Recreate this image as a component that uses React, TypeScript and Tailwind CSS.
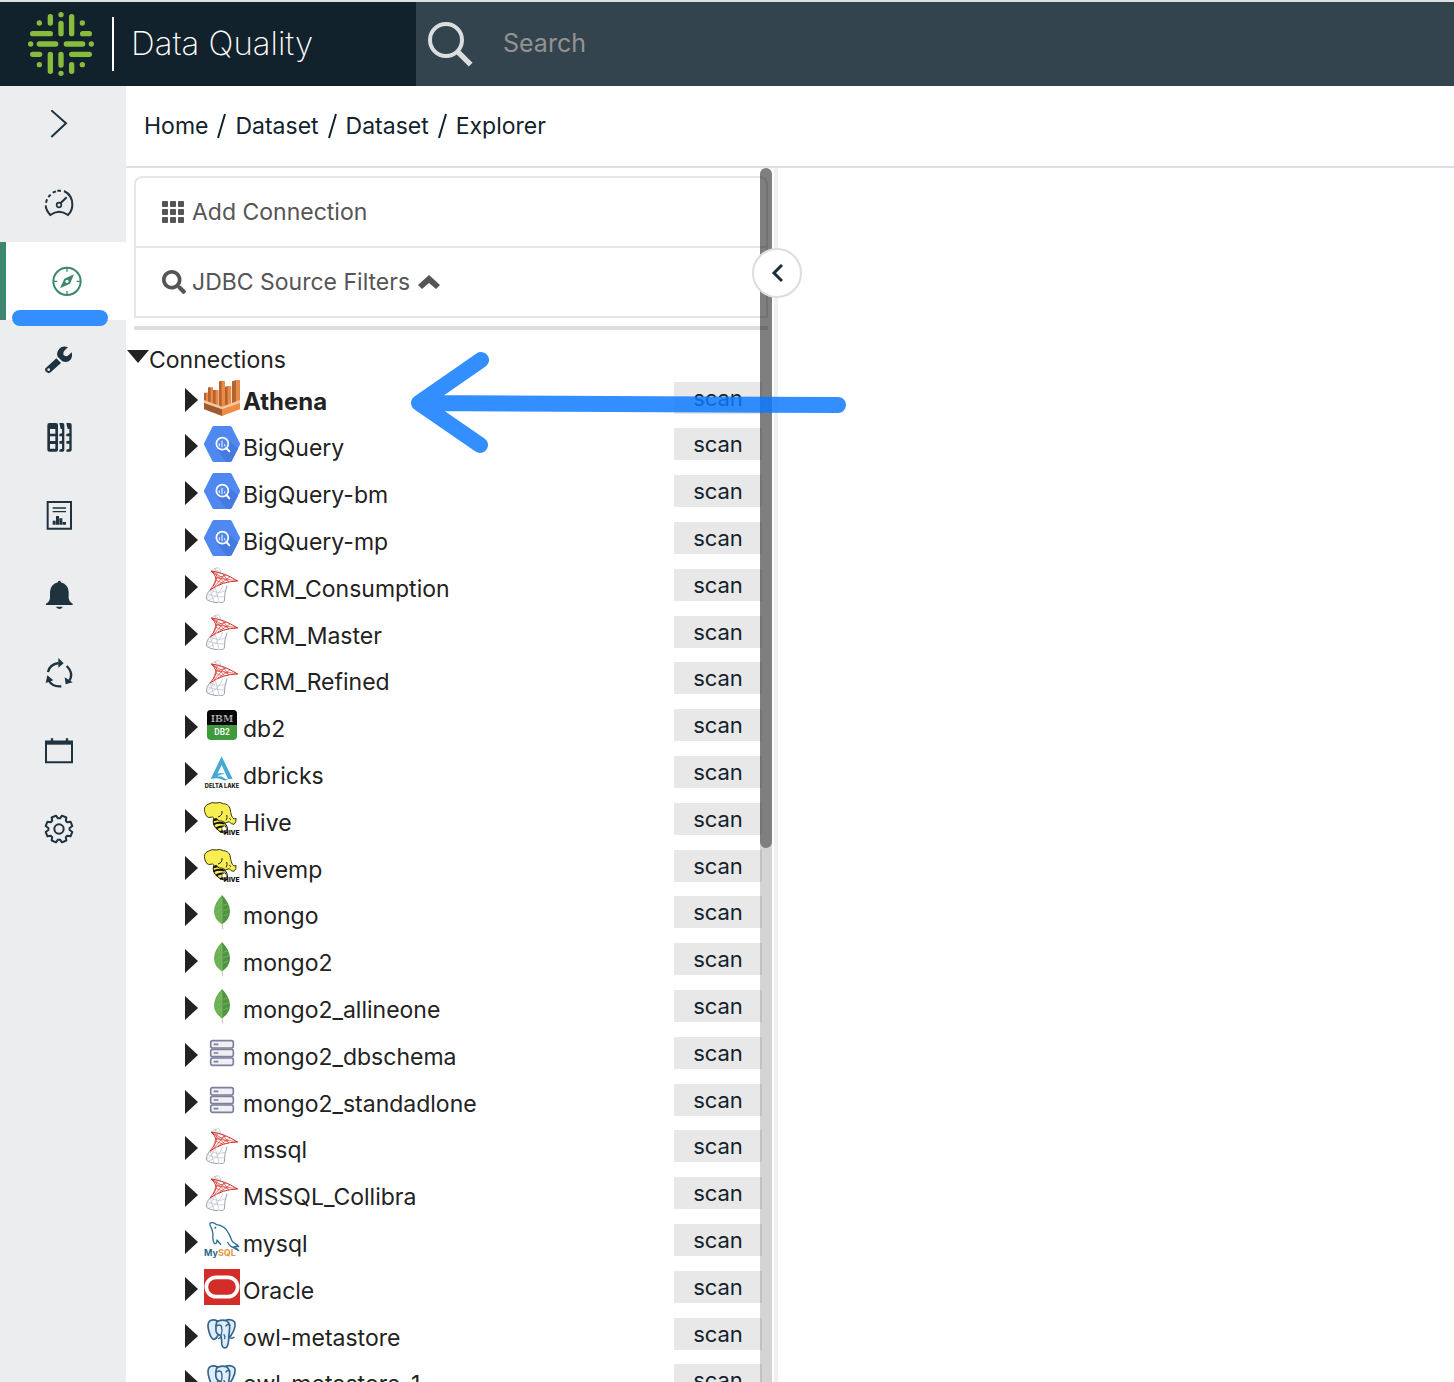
import type { ReactNode } from "react"
import { FaSearch } from "react-icons/fa"

type Source =
  | "athena"
  | "bigquery"
  | "mssql"
  | "db2"
  | "delta"
  | "hive"
  | "mongo"
  | "server"
  | "mysql"
  | "oracle"
  | "postgres"

const connections: { name: string; source: Source; bold?: boolean }[] = [
  { name: "Athena", source: "athena", bold: true },
  { name: "BigQuery", source: "bigquery" },
  { name: "BigQuery-bm", source: "bigquery" },
  { name: "BigQuery-mp", source: "bigquery" },
  { name: "CRM_Consumption", source: "mssql" },
  { name: "CRM_Master", source: "mssql" },
  { name: "CRM_Refined", source: "mssql" },
  { name: "db2", source: "db2" },
  { name: "dbricks", source: "delta" },
  { name: "Hive", source: "hive" },
  { name: "hivemp", source: "hive" },
  { name: "mongo", source: "mongo" },
  { name: "mongo2", source: "mongo" },
  { name: "mongo2_allineone", source: "mongo" },
  { name: "mongo2_dbschema", source: "server" },
  { name: "mongo2_standadlone", source: "server" },
  { name: "mssql", source: "mssql" },
  { name: "MSSQL_Collibra", source: "mssql" },
  { name: "mysql", source: "mysql" },
  { name: "Oracle", source: "oracle" },
  { name: "owl-metastore", source: "postgres" },
  { name: "owl-metastore-1", source: "postgres" },
]

const sourceArt: Record<Source, ReactNode> = {
  athena: (
    <>
      <path d="M0 38h12v40l-12-5zM12 22h9v60l-9-4zM26 30h10v56l-10-4zM45 4l9-2v84l-9-4zM63 20l9-2v64l-9 3zM84 4l14-4v76l-14 5z" fill="#b5642f" />
      <path d="M6 38h6v38l-6-3zM20 22h7v60l-7-2zM35 30h9v56h-9zM53 2l10 2v80l-10 2zM71 18h11v62l-11 4zM97 0h11v70l-11 6z" fill="#e98b47" />
      <path d="M0 60l54 20 54-20v10L54 92 0 70z" fill="#f5c6a2" />
      <path d="M0 69l54 19v20L0 88z" fill="#9f5a30" />
      <path d="M108 69L54 88v20l54-20z" fill="#ee8c45" />
    </>
  ),
  bigquery: (
    <>
      <path d="M30 0h48q3 0 5 3l24 47q2 4 0 8l-24 47q-2 3-5 3H30q-3 0-5-3L1 58q-2-4 0-8L25 3q2-3 5-3z" fill="#4f88f0" />
      <path d="M70 38l32 30-19 37q-2 3-5 3H68L40 72z" fill="#457be0" />
      <circle cx="55" cy="53" r="18" fill="#4f88f0" stroke="#fff" strokeWidth="5" />
      <path d="M67 66l9 10" stroke="#fff" strokeWidth="6" strokeLinecap="round" />
      <path d="M46 52v9M54 44v20M62 55v6" stroke="#d3e2ff" strokeWidth="4" />
    </>
  ),
  mssql: (
    <>
      <g fill="none" stroke="#b6bdc9" strokeWidth="2">
        <path d="M22 12Q32 2 44 2q6 6 7 19M22 12l28 8M30 5l18 10M36 2l-4 14" />
        <path d="M18 68Q6 80 7 96q6 8 38 12 16 0 16-6 0-26 8-46" stroke="#94a0b3" strokeWidth="3" />
        <path d="M8 78q20 12 54 12M18 68q22 14 46 4M7 96q22-18 24-34M12 100q34-12 44-44M30 106Q24 84 18 68M46 108Q40 84 34 62" />
      </g>
      <g fill="none" stroke="#d5332e" strokeWidth="3">
        <path d="M22 12q38 4 79 30-44 0-83 27 22-26 18-36-4-12-14-21z" />
        <path d="M24 13l38 34M36 33l65 8M22 12q34 20 52 32M40 16L28 58M62 23L30 60M78 30L42 54M54 18l20 26M36 33l30-8M36 40l22 9" strokeWidth="2" />
      </g>
    </>
  ),
  db2: (
    <>
      <rect x="9" y="9" width="90" height="90" rx="12" fill="#3f9a3c" />
      <path d="M9 54V21Q9 9 21 9h66q12 0 12 12v33z" fill="#050505" />
      <text x="54" y="46" textAnchor="middle" fontFamily="DejaVu Serif, serif" fontWeight="700" fontSize="28" fill="#b5b5b5">IBM</text>
      <path d="M22 32h64M22 39h64" stroke="#050505" strokeWidth="1" />
      <text x="54" y="83" textAnchor="middle" fontFamily="Roboto, sans-serif" fontWeight="700" fontSize="25" fill="#eef8ed">DB2</text>
    </>
  ),
  delta: (
    <>
      <path d="M53 7l33 68H72L53 33 40 60q10-6 24 0-16-1-24 8 12-4 20 4 6 5 14 3-10 8-22 1-12-6-32-1z" fill="#45a9d4" />
      <text x="54" y="102" textAnchor="middle" fontFamily="Inter, sans-serif" fontWeight="800" fontSize="17" fill="#151515">DELTA LAKE</text>
    </>
  ),
  hive: (
    <>
      <path d="M32 48Q22 62 34 80q14 16 32 18 10-14-2-30-8-18-32-20z" fill="#f7ea4a" stroke="#111" strokeWidth="3" />
      <path d="M28 58q16-6 30-2M28 70q16-8 34-2M36 82q14-8 30-4M48 93q10-6 20-4" fill="none" stroke="#111" strokeWidth="6" />
      <path d="M2 32Q-2 16 12 10q12-8 24-4 12-4 22 2 14 0 20 14 2 14 4 20 2 8 8 12l6-2q2 12-6 18-10 0-14-8-12 8-22-2-10 4-16-8-8 4-12-4-14 4-18-2-4-6-6-14z" fill="#f8ee52" stroke="#3b3812" strokeWidth="3" />
      <path d="M42 48q14-4 12-18M66 58q6-8 2-16M76 52l5 4" fill="none" stroke="#222" strokeWidth="3" />
      <path d="M54 78l9-4 6 10-6 8-9-4z" fill="#fff" stroke="#333" strokeWidth="2" />
      <text x="106" y="102" textAnchor="end" fontFamily="Roboto, sans-serif" fontWeight="900" fontSize="21" fill="#111">HIVE</text>
    </>
  ),
  mongo: (
    <>
      <path d="M52 86h4l2 20h-4z" fill="#d3ccb8" />
      <path d="M54 3Q30 28 30 52q0 24 24 39z" fill="#6bb153" />
      <path d="M54 3q24 25 24 49 0 24-24 39z" fill="#4f9440" />
      <path d="M46 30l-6 10M48 46l-10 10M48 62l-8 6M50 20l-4 8M58 34l12-4M58 50l16-6M58 66l14-6M54 12v78" stroke="#8cc278" strokeWidth="2" />
    </>
  ),
  server: (
    <g fill="#f0f0f3" stroke="#7c7f9d" strokeWidth="5">
      <rect x="20" y="17" width="68" height="22" rx="6" />
      <rect x="20" y="43" width="68" height="22" rx="6" />
      <rect x="20" y="69" width="68" height="22" rx="6" />
      <path d="M29 28h14M29 54h14M29 80h14" />
    </g>
  ),
  mysql: (
    <>
      <path d="M18 3q10-4 20 5 16 2 28 14 10 12 16 30 2 8 10 12 8 4 12 10-8-2-14 0 8 4 14 12-12-8-22-12-8-6-12-14M18 3q-2 8 4 14 4 10 5 20-2 18 4 27 8 4 8-10 6 8 12 14" fill="none" stroke="#2b7095" strokeWidth="4" strokeLinejoin="round" />
      <circle cx="34" cy="17" r="3" fill="#2b7095" />
      <text x="0" y="102" fontFamily="Inter, sans-serif" fontWeight="700" fontSize="27" fill="#27678f">My<tspan fill="#e8973a">SQL</tspan></text>
    </>
  ),
  oracle: (
    <>
      <path d="M0 0h108v108H0z" fill="#d22d29" />
      <rect x="7" y="25" width="94" height="58" rx="29" fill="none" stroke="#fff" strokeWidth="11" />
    </>
  ),
  postgres: (
    <g fill="#deedf8" stroke="#34638f" strokeWidth="5" strokeLinejoin="round" strokeLinecap="round">
      <path d="M40 14Q24 8 16 16q-8 10 0 34 6 20 14 20 8-2 12-12z" />
      <path d="M66 12q18-4 26 6 4 14-6 32-6 12-12 16l-8-8z" />
      <path d="M38 18q14-10 32-2 10 10 6 30-2 14-2 26-2 24-12 24-10-2-9-20 0-10-3-18-10 0-14-12-2-16 2-28z" />
      <path d="M38 30q8-6 14 0 4 14 0 26M66 30q6-8 12-2M44 68q4-2 6-6M80 66q6 2 10-2M60 56q4 4 2 12" fill="none" strokeWidth="4" />
    </g>
  ),
}

const gearPath = (() => {
  const points: string[] = []
  const at = (r: number, deg: number) => {
    const a = (deg * Math.PI) / 180
    return `${(45 + r * Math.sin(a)).toFixed(1)} ${(45 - r * Math.cos(a)).toFixed(1)}`
  }
  for (let i = 0; i < 8; i++) {
    const mid = i * 45 + 22.5
    points.push(`${at(32, mid - 17)} L${at(41, mid - 10)} L${at(41, mid + 10)} L${at(32, mid + 17)}`)
  }
  return `M${points.join(" L")} Z`
})()

type NavItem = { label: string; active?: boolean; art: ReactNode }

const mainNav: NavItem[] = [
  { label: "Expand menu", art: <path d="M22 1l44 39-44 41" fill="none" strokeWidth="6" /> },
  {
    label: "Scorecard",
    art: (
      <g fill="none" strokeWidth="6">
        <path d="M60 9q25 12 25 41 0 18-13 31Q45 61 19 81 6 67 5 52" />
        <path d="M6 44l3-10M13 27l7-7M26 14l10-4M40 8h11" />
        <circle cx="45" cy="51" r="7" strokeWidth="5" />
        <path d="M50 45l18-17" />
      </g>
    ),
  },
  {
    label: "Explorer",
    active: true,
    art: (
      <>
        <circle cx="45" cy="46" r="41" fill="none" strokeWidth="6" />
        <path d="M45 5v12M45 75v12M4 46h12M74 46h12" strokeWidth="4" />
        <path d="M66 25L54 53 24 67l13-29zM45 41a5 5 0 1 0 0 10 5 5 0 0 0 0-10z" fillRule="evenodd" stroke="none" />
      </>
    ),
  },
  {
    label: "Rules",
    art: (
      <g stroke="none">
        <path d="M37 43l14 14-31 28q-6 5-12 0t-5-11zM14 73a4 4 0 1 0 0 8 4 4 0 0 0 0-8z" fillRule="evenodd" />
        <path d="M72 10q-16-6-26 4-10 12-5 24l14 14q14 6 24-4 8-10 4-23L72 35q-8 4-14-3-2-8 5-14z" />
      </g>
    ),
  },
  {
    label: "Catalog",
    art: (
      <g stroke="none">
        <path d="M16 3h20q6 0 6 6v74q0 6-6 6H16q-6 0-6-6V9q0-6 6-6zM18 21v14h16V21zM18 43v14h16V43zM18 66v14h16V66z" fillRule="evenodd" />
        <path d="M46 3h10q5 0 5 6v74q0 6-5 6H46v-6l8-3V65h-8v-7l8-2V43h-8v-7l8-2V21h-4z" />
        <path d="M67 3h10q6 0 6 6v74q0 6-6 6H67v-6l9-3V65h-9v-7l9-2V43h-9v-7l9-2V21h-5z" />
      </g>
    ),
  },
  {
    label: "Reports",
    art: (
      <>
        <path d="M11 6h70v80H11z" fill="none" strokeWidth="6" />
        <path d="M26 24h40M26 35h40" strokeWidth="4" />
        <path d="M26 74V62h9v12zM36 74V48h9v26zM46 74V55h9v19zM56 74v-8h10v8z" stroke="none" />
      </>
    ),
  },
]

const secondaryNav: NavItem[] = [
  {
    label: "Alerts",
    art: (
      <g stroke="none">
        <path d="M42 4q4-4 8 0v3q22 5 24 28v20q2 12 12 16v4H6v-4q10-4 12-16V35Q20 12 42 7z" />
        <path d="M35 80h22q-10 14-22 0z" />
      </g>
    ),
  },
  {
    label: "Jobs",
    art: (
      <>
        <path d="M12 42q4-22 32-27M68 24q22 22 8 44M52 85Q26 88 13 66" fill="none" strokeWidth="7" />
        <path d="M43 0l16 16-16 13zM62 58l24 15-21 6zM5 75l5-23 18 15z" stroke="none" />
      </>
    ),
  },
  {
    label: "Schedule",
    art: (
      <>
        <path d="M6 17h78v62H6z" fill="none" strokeWidth="6" />
        <path d="M3 20h84" strokeWidth="12" />
        <path d="M24 7v12M69 7v12" strokeWidth="7" />
      </>
    ),
  },
  {
    label: "Settings",
    art: (
      <>
        <path d={gearPath} fill="none" strokeWidth="6" strokeLinejoin="round" />
        <circle cx="45" cy="45" r="14" fill="none" strokeWidth="6" />
      </>
    ),
  },
]

function Logo() {
  return (
    <svg viewBox="84 36 198 192" className="h-16 w-[66px]" fill="none" stroke="#87bd3a" strokeWidth="16" strokeLinecap="round">
      <path d="M151 50v19M183 44v0M183 70v31M215 50v51M118 69v0M247 69v0" />
      <path d="M98 101h53M248 101h20M92 132h0M118 132h49M199 132h49M274 132h0M98 163h21M215 163h53" />
      <path d="M151 163v51M183 163v32M183 220v0M215 194v20M118 194v0M247 194v0" />
    </svg>
  )
}

function Header() {
  return (
    <header className="flex h-[86px] shrink-0 border-t-2 border-[#dbe0e2] bg-[#34444e]">
      <div className="flex w-[416px] shrink-0 items-center bg-[#12222c] pl-7">
        <Logo />
        <span className="ml-[18px] h-[54px] w-0.5 bg-white" />
        <span className="ml-[17px] text-[33px] font-extralight text-white">Data Quality</span>
      </div>
      <label className="flex flex-1 items-center pl-3">
        <svg viewBox="0 0 135 135" className="h-[45px] w-[45px] shrink-0" fill="none" stroke="#dadee1">
          <circle cx="54" cy="54" r="48" strokeWidth="12" />
          <path d="M88 88l40 40" strokeWidth="16" />
        </svg>
        <input
          type="search"
          aria-label="Search"
          placeholder="Search"
          className="ml-[30px] w-full bg-transparent text-[25px] text-white outline-none placeholder:text-[#929292]"
        />
      </label>
    </header>
  )
}

function NavButton({ label, active, art }: NavItem) {
  return (
    <button
      type="button"
      aria-label={label}
      className={`flex h-[78px] w-full items-center ${
        active ? "border-l-[6px] border-[#3d8771] bg-white pl-[46px] text-[#3d8771]" : "pl-11 text-[#1f333e]"
      }`}
    >
      <svg viewBox="0 0 90 90" className="h-[30px] w-[30px]" fill="currentColor" stroke="currentColor">
        {art}
      </svg>
    </button>
  )
}

function SideNav() {
  return (
    <nav className="relative flex w-[126px] shrink-0 flex-col gap-0.5 bg-[#ebedef]">
      <div>
        {mainNav.map((item) => (
          <NavButton key={item.label} {...item} />
        ))}
      </div>
      <div>
        {secondaryNav.map((item) => (
          <NavButton key={item.label} {...item} />
        ))}
      </div>
      <span className="absolute left-3 top-[224px] z-10 h-4 w-24 rounded-full bg-[#338eff]" />
    </nav>
  )
}

function Breadcrumbs() {
  const crumbs = ["Home", "Dataset", "Dataset", "Explorer"]
  return (
    <nav className="flex h-[82px] shrink-0 items-center border-b-2 border-[#dbe0e3] pl-[18px] text-[23px] text-[#12222c]">
      {crumbs.map((crumb, i) => (
        <span key={i} className="flex items-center">
          {i > 0 && (
            <svg viewBox="0 0 9 26" className="mx-[9px] h-[26px] w-[9px]" stroke="currentColor" strokeWidth="2">
              <path d="M8 1L1 25" />
            </svg>
          )}
          <a href="#">{crumb}</a>
        </span>
      ))}
    </nav>
  )
}

function ConnectionRow({ name, source, bold }: (typeof connections)[number]) {
  return (
    <li className="flex h-[47px] items-start pl-[59px] nth-[5n+1]:h-[46px]">
      <svg viewBox="0 0 13 24" className="mt-2.5 h-6 w-[13px] shrink-0">
        <path d="M0 0l13 12L0 24z" fill="#222" />
      </svg>
      <svg viewBox="0 0 108 108" className="ml-1.5 mt-0.5 h-9 w-9 shrink-0">
        {sourceArt[source]}
      </svg>
      <span className={`ml-[3px] mt-2 leading-8 ${bold ? "text-2xl leading-8 font-bold" : "text-[23px]"}`}>{name}</span>
      <button type="button" className="ml-auto mr-2.5 mt-1 h-8 w-[88px] shrink-0 bg-[#e8e8e8] text-[22px] leading-8 text-[#12222c]">
        scan
      </button>
    </li>
  )
}

function ExplorerPanel() {
  return (
    <aside className="relative w-[652px] shrink-0 border-r-4 border-[#f0f0f0]">
      <div className="h-full w-[646px] overflow-hidden text-[23px] text-[#222]">
        <div className="mx-2 mr-1 mt-2 rounded-t-lg border-2 border-[#e6e6e6] text-[#555]">
          <button type="button" className="flex h-[70px] w-full items-center border-b-2 border-[#e6e6e6] pl-[26px]">
            <svg viewBox="0 0 22 22" className="mr-2 h-[22px] w-[22px]" fill="currentColor">
              {[0, 8, 16].map((y) => [0, 8, 16].map((x) => <rect key={`${x}-${y}`} x={x} y={y} width="6" height="6" rx="1" />))}
            </svg>
            Add Connection
          </button>
          <button type="button" className="flex h-[68px] w-full items-center pl-[26px]">
            <FaSearch className="mr-1.5 h-6 w-6" />
            JDBC Source Filters
            <svg viewBox="0 0 22 16" className="ml-2 h-4 w-[22px]" fill="currentColor">
              <path d="M11 1l11 10-4 4-7-6-7 6-4-4z" />
            </svg>
          </button>
        </div>
        <div className="ml-2 mr-1 mt-2 h-1 bg-[#ddd]" />
        <div className="mt-3 flex h-9 items-center">
          <svg viewBox="0 0 22 13" className="ml-px mb-2 h-[13px] w-[22px]">
            <path d="M0 0h22L11 13z" fill="#222" />
          </svg>
          Connections
        </div>
        <ul>
          {connections.map((connection) => (
            <ConnectionRow key={connection.name} {...connection} />
          ))}
        </ul>
      </div>

      {/* scrollbar */}
      <div className="absolute inset-y-0 right-0.5 w-3 rounded-t-full bg-black/17">
        <div className="h-[680px] rounded-full bg-black/40" />
      </div>
      <button
        type="button"
        aria-label="Collapse panel"
        className="absolute -right-7 top-20 flex h-[50px] w-[50px] items-center justify-center rounded-full border-2 border-[#ddd] bg-white"
      >
        <svg viewBox="0 0 12 20" className="h-5 w-3" fill="none" stroke="#1a2e39" strokeWidth="3">
          <path d="M11 2l-8 8 8 8" />
        </svg>
      </button>

      {/* hand-drawn pointer at the first connection */}
      <svg viewBox="0 0 440 106" className="pointer-events-none absolute left-[283px] top-[182px] h-[106px] w-[440px]">
        <g opacity="0.84" fill="none" stroke="#0c7aff" strokeWidth="16" strokeLinecap="round" strokeLinejoin="round">
          <path d="M72 10L10 53l61 42M12 53l417 2" />
        </g>
      </svg>
    </aside>
  )
}

export default function App() {
  return (
    <div className="flex h-screen flex-col overflow-hidden bg-white font-[Inter,sans-serif]">
      <Header />
      <div className="flex min-h-0 flex-1">
        <SideNav />
        <div className="flex min-w-0 flex-1 flex-col">
          <Breadcrumbs />
          <div className="flex min-h-0 flex-1">
            <ExplorerPanel />
            <main className="flex-1" />
          </div>
        </div>
      </div>
    </div>
  )
}
